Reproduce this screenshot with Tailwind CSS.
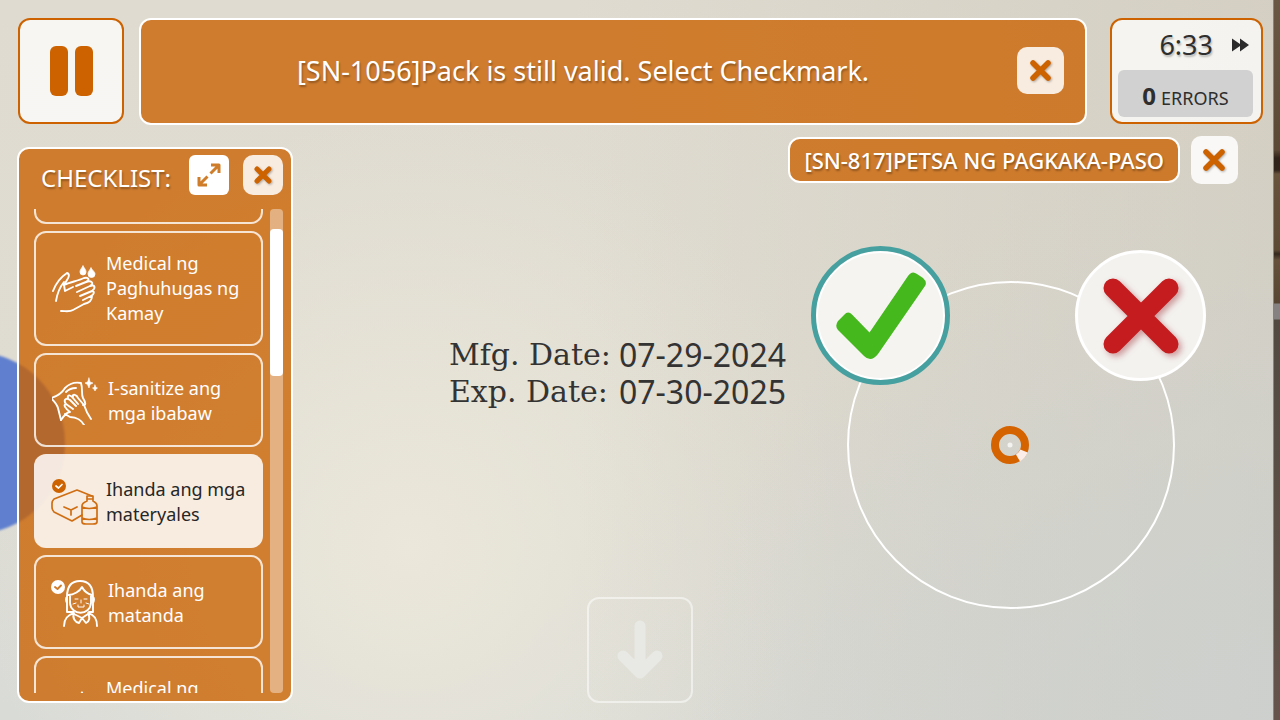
<!DOCTYPE html>
<html lang="fil">

<head>
    <meta charset="UTF-8" />
    <meta name="viewport" content="width=device-width, initial-scale=1.0" />
    <title>Checklist</title>
    <script src="https://cdn.jsdelivr.net/npm/@tailwindcss/browser@4"></script>
</head>

<body class="relative flex h-screen min-h-[600px] flex-col overflow-hidden bg-[#dedbd1] pb-[17px] font-['Noto_Sans',sans-serif] text-white">
    <!-- Scene behind the controls -->
    <div class="absolute inset-0 -z-10 bg-[radial-gradient(circle_at_32%_76%,#ebe7da_0%,#ebe7da00_42%),linear-gradient(180deg,#dfdbd0_0%,#dfdcd2_55%,#d9dbd7_100%)]">
        <div class="absolute inset-0 bg-[linear-gradient(90deg,transparent_45%,#d0cabdb0_100%)]"></div>
        <div class="absolute inset-0 bg-[radial-gradient(circle_at_100%_100%,#cbd0cfd0_0%,#cbd0cf00_40%)]"></div>
        <div class="absolute top-[352px] -left-[117px] size-[182px] rounded-full bg-[#6080cf] blur-[1px]"></div>
        <div class="absolute inset-y-0 right-0 w-[7px] border-l border-[#8a8378] bg-[linear-gradient(180deg,#6b5844_0,#5b4835_150px,#2f2218_158px,#30241b_170px,#67523c_174px,#5d4a35_250px,#33271c_254px,#65513c_260px,#574632_303px,#858281_304px,#858281_319px,#524a41_320px,#65544b_100%)]"></div>
    </div>

    <header class="flex h-[125px] shrink-0 items-stretch pt-[18px] pr-[17px] pl-[18px]">
        <button aria-label="Pause" class="mr-[15px] mb-px flex w-[106px] items-center justify-center gap-[7px] rounded-xl border-2 border-[#cc6200] bg-white/75">
            <span class="h-[50px] w-[18px] rounded-md bg-[#cc6200]"></span>
            <span class="h-[50px] w-[18px] rounded-md bg-[#cc6200]"></span>
        </button>

        <div class="mr-[23px] flex flex-1 items-center rounded-xl border-2 border-white bg-[#ca6200]/78 pr-[21px] pb-0.5 pl-2">
            <p class="flex-1 text-center text-[27px] leading-9 text-shadow-[1px_2px_2px_rgb(0_0_0/0.3)]">[SN-1056]Pack is still valid. Select Checkmark.</p>
            <button aria-label="Close message" class="flex size-[47px] items-center justify-center rounded-[10px] bg-white/85">
                <svg class="size-[26px] drop-shadow-[1px_1px_1px_rgb(0_0_0/0.3)]" viewBox="0 0 26 26" stroke="#cc6200" stroke-width="5.500" stroke-linecap="round">
                    <path d="M5 5l15 15M20 5l-15 15" />
                </svg>
            </button>
        </div>

        <div class="mb-px flex w-[153px] flex-col rounded-xl border-2 border-[#cc6200] bg-white/75 pr-2 pb-[5px] pl-1.5 text-[#2e2e2e]">
            <div class="flex flex-1 items-center justify-end gap-[19px] pr-1">
                <span class="text-[27px] leading-9 text-shadow-[1px_2px_2px_rgb(0_0_0/0.25)]">6:33</span>
                <svg class="h-[14px] w-[17px]" viewBox="0 0 17 14" fill="#2b2b2b">
                    <path d="M0 0.500L8 6V0.500L17 7L8 13.500V8L0 13.500Z" />
                </svg>
            </div>
            <div class="flex h-[47px] items-baseline justify-center gap-[5px] rounded-md bg-[#d1d1d1] pt-2">
                <b class="text-2xl leading-9">0</b>
                <span class="text-lg leading-6">ERRORS</span>
            </div>
        </div>
    </header>

    <main class="flex min-h-0 flex-1 pl-[17px]">
        <aside class="mt-[22px] flex w-[276px] shrink-0 flex-col rounded-xl border-2 border-white bg-[#ca6200]/78 pb-2">
            <div class="flex h-[60px] shrink-0 items-start pt-1.5 pr-2 pl-[22px]">
                <h1 class="mt-[7px] flex-1 text-2xl text-shadow-[1px_2px_2px_rgb(0_0_0/0.3)]">CHECKLIST:</h1>
                <button aria-label="Expand" class="mr-[14px] flex size-10 items-center justify-center rounded-md bg-white">
                    <svg class="size-6" viewBox="0 0 24 24" fill="none" stroke="#cf7d2b" stroke-width="3" stroke-linejoin="round">
                        <path d="M14 2h8V10M22 2l-8.500 8.500M2 14v8H10M2 22l8.500-8.500" />
                    </svg>
                </button>
                <button aria-label="Close checklist" class="flex size-10 items-center justify-center rounded-[10px] bg-white/85">
                    <svg class="size-[22px] drop-shadow-[1px_1px_1px_rgb(0_0_0/0.3)]" viewBox="0 0 22 22" stroke="#cc6200" stroke-width="5" stroke-linecap="round">
                        <path d="M5 5l12 12M17 5L5 17" />
                    </svg>
                </button>
            </div>

            <div class="flex min-h-0 flex-1 justify-between pr-2 pl-[15px]">
                <ul class="flex w-[229px] flex-col gap-[7px] overflow-hidden text-lg leading-[25px]">
                    <li class="-mt-20 h-[95px] shrink-0 rounded-xl border-2 border-white/80"></li>
                    <li class="flex h-[115px] shrink-0 items-center gap-2 rounded-xl border-2 border-white/80 pl-[14px]">
                        <svg class="size-12 shrink-0" viewBox="0 0 48 48" fill="none" stroke="#fff" stroke-width="1.900" stroke-linecap="round" stroke-linejoin="round">
                            <path d="M3 26C6 18 11 12 17 8C20 9 19 12 17 15L14 20C20 17 28 16 34 13C39 12 40 15 36 17L26 21" />
                            <path d="M6 36C7 30 9 23 14 17M14 20L15 26L23 22" />
                            <path d="M36 17C41 15 45 18 40 21L27 27M40 21C45 19 46 23 42 26L30 31M42 26C45 26 44 30 41 31L33 35M42 31C42 35 39 38 34 39L23 45C20 47 16 46 11 46" />
                            <path d="M33 1C31 4 30 5 30 7A3 3 0 0 0 36 7C36 5 35 4 33 1ZM41 3C39 6 38 7 38 9A3.500 3.500 0 0 0 45 9C45 7 43 6 41 3Z" fill="#fff" stroke-width=".8" />
                        </svg>
                        <span>Medical ng Paghuhugas ng Kamay</span>
                    </li>
                    <li class="flex h-[94px] shrink-0 items-center gap-2 rounded-xl border-2 border-white/80 pt-0.5 pl-4">
                        <svg class="size-12 shrink-0" viewBox="2 0 48 48" fill="none" stroke="#fff" stroke-width="1.900" stroke-linecap="round" stroke-linejoin="round">
                            <path d="M11 43L8 31C7 27 4 24 1 21C8 19 12 16 15 11C20 6 26 5 31 6C33 12 31 17 33 21C36 26 36 28 33 28" />
                            <path d="M16 15C19 12 22 11 26 11M11 43C15 37 17 35 20 35C15 31 13 28 16 27L23 32M16 27C13 23 16 20 20 23L26 29M18 21C17 17 21 18 23 21L28 27M23 20C22 16 27 18 28 21L34 28C36 34 38 38 41 42M15 37L20 40C27 40 32 44 34 48" />
                            <path d="M39 1L40 5L43 6L40 7.500L39 11L37.500 7.500L35 6L37.500 5ZM45 8L46 10.500L47.500 11L46 12L45 14L44 12L42.500 11L44 10.500Z" fill="#fff" stroke-width=".6" />
                        </svg>
                        <span>I-sanitize ang mga ibabaw</span>
                    </li>
                    <li class="flex h-[94px] shrink-0 items-center gap-2 rounded-xl bg-white/85 pt-0.5 pl-4 text-[#262626]">
                        <svg class="size-12 shrink-0" viewBox="0 0 48 48" fill="none" stroke="#cf6e12" stroke-width="1.700" stroke-linecap="round" stroke-linejoin="round">
                            <circle cx="9" cy="8" r="7" fill="#cc6200" stroke="none" />
                            <path d="M6 8L8.500 10L12 6.500" stroke="#fff" />
                            <path d="M32 37L22 43L4 34Q2 32 2 29V25Q2 23 4 21L27 12L42 18M14 29L21 32L27 29M21 32V37" />
                            <path d="M37 18H43V23Q47 25 47 28V44Q47 46 43 46H36Q32 46 32 44V28Q32 25 37 23ZM37 21H43M32 29Q39 32 47 29M32 40Q39 43 47 40" />
                        </svg>
                        <span>Ihanda ang mga materyales</span>
                    </li>
                    <li class="flex h-[94px] shrink-0 items-center gap-2 rounded-xl border-2 border-white/80 pt-0.5 pl-4">
                        <svg class="size-12 shrink-0" viewBox="2 0 48 48" fill="none" stroke="#fff" stroke-width="1.900" stroke-linecap="round" stroke-linejoin="round" overflow="visible">
                            <circle cx="8" cy="8" r="7" fill="#fff" stroke="none" />
                            <path d="M5 8L7.500 10L11 6.500" stroke="#cf7d2b" />
                            <path d="M17 33V18C17 6 22 2 30 2C39 2 43 7 43 18V33H39M17 33H23M20 17V24C21 37 40 37 41 24V17M18 16C24 16 30 12 32 8C34 12 38 15 42 16M17 18Q15 20 17 24M43 18Q45 20 43 24" />
                            <path d="M14 47C14 39 18 36 24 34C22 39 25 43 29 44L32 39L36 44C40 42 40 38 38 34C45 36 47 40 47 47M24 35L32 39L38 35" />
                            <path d="M25 20H28M34 20H37M23 25L26 24M39 25L36 24M28 26V28H34V26M31 21V24" stroke-width="1" />
                        </svg>
                        <span>Ihanda ang matanda</span>
                    </li>
                    <li class="flex h-[115px] shrink-0 items-center gap-2 rounded-xl border-2 border-white/80 pl-[14px]">
                        <svg class="size-12 shrink-0" viewBox="0 0 48 48" fill="#fff">
                            <path d="M32 1C29 5 29 6 29 7A3 3 0 0 0 35 7C35 6 34 4 32 1ZM41 3C38 6 38 7 38 9A3 3 0 0 0 44 9C44 8 43 6 41 3Z" />
                        </svg>
                        <span>Medical ng Paghuhugas ng Kamay</span>
                    </li>
                </ul>
                <div class="w-[13px] rounded-[4px] bg-white/40 pt-5">
                    <div class="h-[147px] rounded-[4px] bg-white"></div>
                </div>
            </div>
        </aside>

        <section class="flex flex-1 flex-col pt-[11px]">
            <div class="flex items-center justify-end gap-[11px] pr-[42px]">
                <h2 class="rounded-xl border-2 border-white bg-[#ca6200]/78 px-[14px] py-[5px] text-[22px] leading-8 font-medium text-shadow-[1px_2px_2px_rgb(0_0_0/0.3)]">[SN-817]PETSA NG PAGKAKA-PASO</h2>
                <button aria-label="Close label" class="flex h-12 w-[47px] items-center justify-center rounded-[10px] bg-white/85">
                    <svg class="size-[26px] drop-shadow-[1px_1px_1px_rgb(0_0_0/0.3)]" viewBox="0 0 26 26" stroke="#cc6200" stroke-width="5.500" stroke-linecap="round">
                        <path d="M4 5l16 16M20 5L4 21" />
                    </svg>
                </button>
            </div>

            <div class="mt-[62px] flex items-start justify-end gap-[25px] pr-[74px]">
                <dl class="mt-[90px] grid grid-cols-[170px_auto] font-['DejaVu_Serif',serif] text-[30px] leading-[37px] text-[#333]">
                    <dt>Mfg. Date:</dt>
                    <dd class="font-['Noto_Sans',sans-serif] text-[32px]">07-29-2024</dd>
                    <dt>Exp. Date:</dt>
                    <dd class="font-['Noto_Sans',sans-serif] text-[32px]">07-30-2025</dd>
                </dl>

                <!-- Radial menu -->
                <div class="relative h-[363px] w-[395px] shrink-0">
                    <div class="absolute top-[35px] left-9 size-[328px] rounded-full border-[2px] border-white"></div>
                    <button aria-label="Checkmark" class="absolute top-0 left-0 flex size-[139px] items-center justify-center rounded-full border-[5px] border-[#46a09f] bg-[#f5f4f1] ring-inset ring-2 ring-white">
                        <svg class="h-[90px] w-[92px] shrink-0" viewBox="0 0 92 90" fill="#45b81d">
                            <path d="M3 50L9 44Q13 39.500 17 43.500L34.500 61.500L73 5Q77 -1 82 3L88 7Q92.500 11 90 15L43 83Q36 92 29 85L3 59Q-.5 55 3 50Z" />
                        </svg>
                    </button>
                    <button aria-label="Cross" class="absolute top-1 right-0 flex size-[131px] items-center justify-center rounded-full border-[3px] border-white bg-[#f3f2ef]">
                        <svg class="size-[84px] drop-shadow-[3px_3px_3px_rgb(150_20_30/0.4)]" viewBox="0 0 84 84" fill="none" stroke="#c41c1f">
                            <path d="M14 14L70 70M70 14L14 70" stroke-width="19" stroke-linecap="round" />
                        </svg>
                    </button>
                    <svg class="absolute top-[180px] left-[180px] size-[38px]" viewBox="0 0 38 38" fill="none" stroke-width="8">
                        <circle cx="19" cy="19" r="15" stroke="#d46300" />
                        <path d="M33 25A15 15 0 0 1 27 32" stroke="#fbeeea" />
                        <circle cx="19" cy="19" r="2.500" fill="#f4f3f0" stroke="none" />
                    </svg>
                </div>
            </div>
        </section>
    </main>

    <!-- Scroll down hint, floats over the scene -->
    <button aria-label="Down" class="absolute bottom-[17px] left-1/2 flex size-[106px] -translate-x-1/2 items-center justify-center rounded-xl border-2 border-white/50">
        <svg class="h-[60px] w-[46px]" viewBox="0 0 46 60" fill="none" stroke="#e8e9e4" stroke-width="11" stroke-linecap="round" stroke-linejoin="round">
            <path d="M23 6V52M6 36L23 53L40 36" />
        </svg>
    </button>
</body>

</html>
